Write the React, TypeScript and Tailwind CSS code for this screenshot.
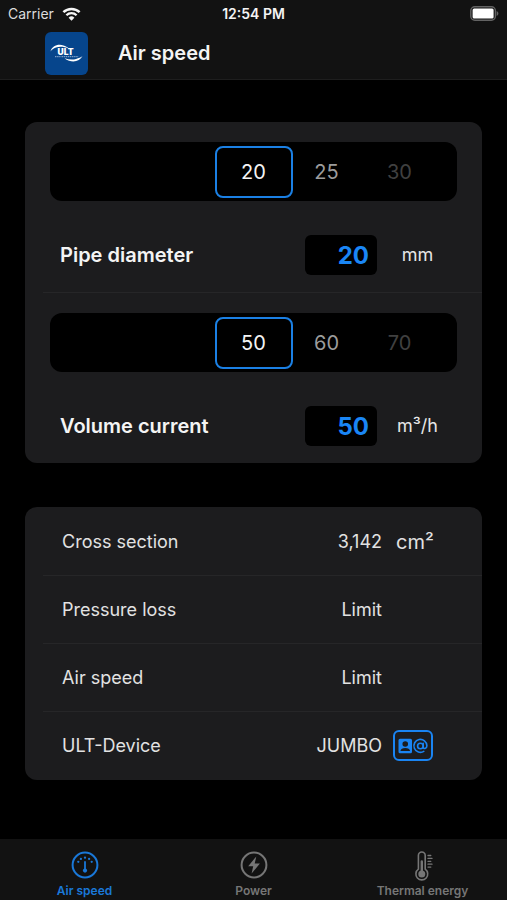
import { useState } from 'react';
import type { ReactNode } from 'react';

function WifiIcon() {
  return (
    <svg width="19" height="14" viewBox="0 0 19 14" aria-hidden="true">
      <path d="M1.4 5.2a11.6 11.6 0 0 1 16.2 0" fill="none" stroke="#f5f5f5" strokeWidth="2.5" />
      <path d="M4.4 8.3a7.3 7.3 0 0 1 10.2 0" fill="none" stroke="#f5f5f5" strokeWidth="2.3" />
      <path d="M9.5 13.8 6.6 10.8a4.1 4.1 0 0 1 5.8 0z" fill="#f5f5f5" />
    </svg>
  );
}

function BatteryIcon() {
  return (
    <svg width="31" height="15" viewBox="0 0 31 15" aria-hidden="true">
      <rect x="2.8" y="0.8" width="24.6" height="13.4" rx="4" fill="none" stroke="#636363" strokeWidth="1.4" />
      <rect x="4.6" y="2.6" width="21" height="9.8" rx="1.5" fill="#fff" />
      <path d="M28.6 5v5c1-.4 1.8-1.4 1.8-2.5S29.6 5.4 28.6 5z" fill="#636363" />
    </svg>
  );
}

function Logo() {
  return (
    <svg width="43" height="43" viewBox="0 0 43 43" role="img" aria-label="ULT" className="rounded-md bg-[#06458c]">
      <path d="M5.500 19.500C7 14 13 11.500 18.500 13.500c2 .7 4 1.700 5.500 3-5-2-9.500-2.400-13-1-2.600 1-4.400 2.300-5.500 4z" fill="#fff" />
      <path d="M37.500 24c-2.200 4.800-8 6.500-13.500 4.700-1.600-.5-3.200-1.500-4.400-2.500 4 1.300 8.200 1.600 11.400.7 2.700-.7 5-1.600 6.500-2.900z" fill="#fff" />
      <path d="M10 24.700h5.500M16.500 24.700h17" stroke="#b9cce4" strokeWidth="0.8" strokeDasharray="1.500 .6" />
      <text x="12.500" y="23" fill="#fff" fontSize="8.500" fontWeight="900" className="font-['Inter',sans-serif]">ULT</text>
    </svg>
  );
}

function GaugeIcon() {
  return (
    <svg width="28" height="28" viewBox="0 0 28 28" fill="none" stroke="currentColor" aria-hidden="true">
      <circle cx="14" cy="14" r="12.400" strokeWidth="2" />
      <path d="M14 11v8" strokeWidth="1.800" strokeLinecap="round" />
      <g fill="currentColor" stroke="none">
        <circle cx="14" cy="19.600" r="2.100" />
        <circle cx="7.300" cy="10.800" r="1.150" />
        <circle cx="9.900" cy="7.900" r="1.150" />
        <circle cx="14" cy="6.700" r="1.150" />
        <circle cx="18.100" cy="7.900" r="1.150" />
        <circle cx="20.700" cy="10.800" r="1.150" />
      </g>
    </svg>
  );
}

function PowerIcon() {
  return (
    <svg width="28" height="28" viewBox="0 0 28 28" fill="none" stroke="currentColor" aria-hidden="true">
      <circle cx="14" cy="14" r="12.400" strokeWidth="2" />
      <path d="M16.300 5.500 8.200 15.200h5L11.600 22.500l8.300-9.900h-5.200z" fill="currentColor" stroke="none" />
    </svg>
  );
}

function ThermometerIcon() {
  return (
    <svg width="28" height="30" viewBox="0 0 28 30" fill="none" stroke="currentColor" aria-hidden="true">
      <path d="M9.400 18.200V4.400a3.400 3.400 0 0 1 6.800 0v13.800a5.900 5.900 0 1 1-6.800 0z" strokeWidth="1.600" />
      <path d="M12.800 10.500v12" strokeWidth="2.400" strokeLinecap="round" />
      <circle cx="12.800" cy="23" r="3.500" fill="currentColor" stroke="none" />
      <path d="M19 4.500h2.800M19 7.400h4M19 10.300h2.800M19 13.200h4M19 16.100h2.800" strokeWidth="1.300" strokeLinecap="round" />
    </svg>
  );
}

function ContactIcon() {
  return (
    <svg width="32" height="16" viewBox="0 0 32 16" aria-hidden="true">
      <path
        fillRule="evenodd"
        fill="currentColor"
        d="M3 .8h10.500A1.500 1.500 0 0 1 15 2.300v11.400a1.500 1.500 0 0 1-1.500 1.500H3a1.500 1.500 0 0 1-1.500-1.500V2.300A1.500 1.500 0 0 1 3 .8zM8.250 3.200a2.800 2.800 0 1 0 0 5.600 2.800 2.800 0 0 0 0-5.600zM3.400 13.100h9.700c-.3-2.100-2-3-4.850-3s-4.550.9-4.850 3z"
      />
      <g fill="none" stroke="currentColor" strokeWidth="1.600" strokeLinecap="round">
        <circle cx="23.400" cy="8" r="2.800" />
        <path d="M26.200 5.300v3.700c0 2.400 3.700 2 3.700-1.300a6.500 6.500 0 1 0-3.100 5.700" />
      </g>
    </svg>
  );
}

interface QuantityProps {
  id: string;
  label: string;
  unit: string;
  options: string[];
}

function Quantity({ id, label, unit, options }: QuantityProps) {
  const [value, setValue] = useState(options[0]);
  return (
    <section className="pt-5">
      <div role="group" aria-label={`${label} presets`} className="mx-[25px] grid h-[59px] grid-cols-[1fr_78px_1fr] items-center rounded-xl bg-black text-xl">
        <button type="button" onClick={() => setValue(options[0])} className="col-start-2 h-[52px] rounded-lg border-2 border-[#1b80e4] text-[#f4f4f4]">
          {options[0]}
        </button>
        <div className="flex">
          <button type="button" onClick={() => setValue(options[1])} className="w-[68px] text-[#9c9c9c]">{options[1]}</button>
          <button type="button" onClick={() => setValue(options[2])} className="w-[78px] text-[#404040]">{options[2]}</button>
        </div>
      </div>
      <div className="mt-[34px] flex items-center pr-6 pb-[17px] pl-[35px]">
        <label htmlFor={id} className="flex-1 text-xl font-semibold text-[#f4f4f4]">{label}</label>
        <input
          id={id}
          inputMode="numeric"
          value={value}
          onChange={(event) => setValue(event.target.value)}
          className="h-10 w-[72px] rounded-md bg-black pr-2 text-right text-2xl font-bold text-[#1a86f5] outline-none"
        />
        <span className="w-[81px] text-center text-lg text-[#e6e6e6]">{unit}</span>
      </div>
    </section>
  );
}

function Divider() {
  return <hr className="ml-[18px] border-[#262628]" />;
}

function ResultRow({ label, value, children }: { label: string; value: string; children?: ReactNode }) {
  return (
    <div className="flex h-[67px] items-center pl-[37px] text-lg text-[#e2e2e2]">
      <dt className="flex-1">{label}</dt>
      <dd className="flex items-center">
        {value}
        <span className="flex w-[100px] items-center">{children}</span>
      </dd>
    </div>
  );
}

const tabs = [
  { label: 'Air speed', icon: <GaugeIcon />, active: true },
  { label: 'Power', icon: <PowerIcon />, active: false },
  { label: 'Thermal energy', icon: <ThermometerIcon />, active: false },
];

export default function App() {
  return (
    <div className="flex min-h-screen flex-col bg-black font-['Inter',sans-serif]">
      <header className="border-b border-[#1e1e1e] bg-[#121212] text-[#f4f4f4]">
        <div className="grid h-[27px] grid-cols-3 items-center px-2 text-sm">
          <div className="flex items-center gap-2 text-[#dcdcdc]">
            Carrier
            <WifiIcon />
          </div>
          <time className="text-center font-semibold">12:54 PM</time>
          <div className="flex justify-end">
            <BatteryIcon />
          </div>
        </div>
        <div className="flex h-[52px] items-center gap-[30px] pl-[45px]">
          <Logo />
          <h1 className="text-xl font-semibold">Air speed</h1>
        </div>
      </header>

      <main className="flex flex-1 flex-col gap-[44px] px-[25px] pt-[42px] pb-10">
        <form className="rounded-xl bg-[#1c1c1e]" onSubmit={(event) => event.preventDefault()}>
          <Quantity id="pipe-diameter" label="Pipe diameter" unit="mm" options={['20', '25', '30']} />
          <Divider />
          <Quantity id="volume-current" label="Volume current" unit="m³/h" options={['50', '60', '70']} />
        </form>

        <dl className="rounded-xl bg-[#1c1c1e] py-px">
          <ResultRow label="Cross section" value="3,142">
            <span className="pl-[14px] text-xl">cm²</span>
          </ResultRow>
          <Divider />
          <ResultRow label="Pressure loss" value="Limit" />
          <Divider />
          <ResultRow label="Air speed" value="Limit" />
          <Divider />
          <ResultRow label="ULT-Device" value="JUMBO">
            <button type="button" aria-label="Contact" className="ml-[11px] flex h-[31px] w-10 items-center justify-center rounded-md border-2 border-[#1a84f2] text-[#1a84f2]">
              <ContactIcon />
            </button>
          </ResultRow>
        </dl>
      </main>

      <nav className="grid h-[61px] grid-cols-3 bg-[#121212]">
        {tabs.map((tab) => (
          <a
            key={tab.label}
            href="#"
            aria-current={tab.active ? 'page' : undefined}
            className={`flex flex-col items-center pt-3 text-xs font-semibold ${tab.active ? 'text-[#1a78d8]' : 'text-[#767676]'}`}
          >
            <span className="flex h-8 items-start">{tab.icon}</span>
            {tab.label}
          </a>
        ))}
      </nav>
    </div>
  );
}
